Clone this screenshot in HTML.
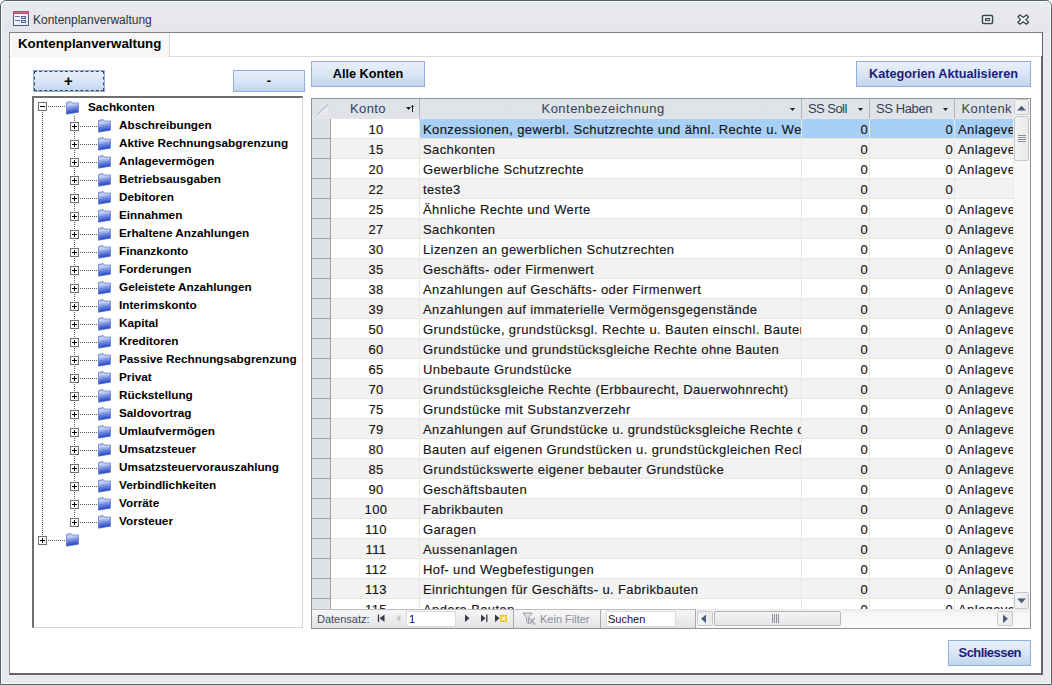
<!DOCTYPE html>
<html><head><meta charset="utf-8">
<style>
*{margin:0;padding:0;box-sizing:border-box}
html,body{width:1052px;height:685px;overflow:hidden;background:#fff}
body{font-family:"Liberation Sans",sans-serif;position:relative}
.abs{position:absolute}
#win{position:absolute;left:0;top:0;width:1052px;height:685px;border:1px solid #5a6068;border-radius:6px 6px 0 0;background:#e8eaee}
#win2{position:absolute;left:1px;top:1px;width:1050px;height:683px;border:1px solid #fbfcfd;border-radius:5px 5px 0 0;background:linear-gradient(#e9ebef,#e3e5ea 31px,#e8eaee 32px)}
#title{position:absolute;left:33px;top:13px;font-size:12px;color:#2b3240;white-space:nowrap}
#inner{position:absolute;left:9px;top:32px;width:1034px;height:643px;background:#fff;border-left:1px solid #898c90;border-top:1px solid #7d8084;border-right:2px solid #62666a;border-bottom:2px solid #62666a}
#tabstrip{position:absolute;left:10px;top:33px;width:1031px;height:24px;border-bottom:1px solid #d9dadc;background:#fff}
#tab{position:absolute;left:11px;top:33px;width:159px;height:24px;background:#f6f6f7;border-right:1px solid #dcdddf;font-weight:bold;font-size:13.3px;color:#000;padding:3px 0 0 7px;white-space:nowrap}
.btn{position:absolute;border:1px solid #8fb0da;background:linear-gradient(#e9f0fa,#d9e5f5 50%,#c1d5ef);font-weight:bold;font-size:13px;text-align:center;white-space:nowrap}
#tree{position:absolute;left:32px;top:96px;width:271px;height:532px;border-left:2px solid #6f6f6f;border-top:2px solid #6f6f6f;border-right:1px solid #d6d6d6;border-bottom:1px solid #d6d6d6;background:#fff;overflow:hidden}

.eb{position:absolute;width:9px;height:9px;border:1px solid #707070;background:#fff}
.eb .h{position:absolute;left:1px;top:3px;width:5px;height:1px;background:#000}
.eb .v{position:absolute;left:3px;top:1px;width:1px;height:5px;background:#000}
.tt{position:absolute;font-weight:bold;font-size:11.75px;line-height:14px;color:#000;white-space:nowrap}
#ds{position:absolute;left:311px;top:98px;width:720px;height:531px;border:1px solid #8f9195;background:#fff;overflow:hidden;font-size:13px}
#dsclip{position:absolute;left:0;top:20px;width:701px;height:490px;overflow:hidden}
.r{position:absolute;left:0;width:760px;height:20px;background:#fff}
.r.alt{background:#f2f2f2}
.r .c{position:absolute;top:0;height:20px;border-right:1px solid #e8e8de;border-bottom:1px solid #e8e8de;line-height:19px;padding-top:1px;white-space:nowrap;overflow:hidden;color:#141414;letter-spacing:0.38px;-webkit-text-stroke:0.15px #141414}
.rs{position:absolute;left:0;top:0;width:19px;height:20px;background:#dfe3e8;border-right:1px solid #9da0a4;border-bottom:1px solid #9da0a4}
.ck{left:19px;width:89px;text-align:center;padding-left:2px}
.cb{left:108px;width:382px;padding-left:3px}
.cs{left:490px;width:68px;text-align:right;padding-right:1px}
.ch{left:558px;width:85px;text-align:right;padding-right:1px}
.cc{left:643px;width:120px;padding-left:3px}
.r.sel .cb,.r.sel .cs,.r.sel .ch,.r.sel .cc{background:#a8d0f4}

#hdr{position:absolute;left:0;top:0;width:760px;height:20px;background:linear-gradient(#e0e3e7,#dfe2e6 70%,#e3e5ea)}
.hb{position:absolute;top:0;width:1px;height:20px;background:#b3b6ba}
.hc{position:absolute;top:0;height:19px;line-height:19px;color:#34405a;white-space:nowrap;font-size:13px}

.sbtn{position:absolute;border:1px solid #c6c8cc;border-radius:2px;background:linear-gradient(90deg,#f4f4f5,#e9eaec)}
.nt{position:absolute;font-size:11px;line-height:17px;white-space:nowrap}
</style></head><body>
<div id="win"></div>
<div id="win2"></div>
<svg class="abs" style="left:13px;top:11px" width="17" height="16" viewBox="0 0 17 16">
  <defs><linearGradient id="ig" x1="0" y1="0" x2="1" y2="1"><stop offset="0" stop-color="#ffffff"/><stop offset="1" stop-color="#dfe6f6"/></linearGradient></defs>
  <rect x="0.5" y="0.5" width="15" height="14" fill="url(#ig)" stroke="#4a5d82"/>
  <rect x="0" y="0" width="16" height="3" fill="#c8406a"/>
  <rect x="1" y="1" width="14" height="1" fill="#e06a8c"/>
  <line x1="2" y1="5.5" x2="7" y2="5.5" stroke="#5b6f9a"/>
  <line x1="2" y1="9.5" x2="7" y2="9.5" stroke="#5b6f9a"/>
  <rect x="8.5" y="5.5" width="4" height="2" fill="#dfe5f2" stroke="#4f6290"/>
  <rect x="8.5" y="9.5" width="4" height="2" fill="#dfe5f2" stroke="#4f6290"/>
</svg>
<div id="title">Kontenplanverwaltung</div>
<svg class="abs" style="left:981px;top:14px" width="14" height="11" viewBox="0 0 14 11">
  <rect x="1.5" y="1.5" width="10" height="8" rx="1" fill="#fff" stroke="#3e4450" stroke-width="1.5"/>
  <rect x="4.5" y="4.5" width="4" height="2" fill="none" stroke="#3e4450" stroke-width="1.2"/>
</svg>
<svg class="abs" style="left:1017px;top:14px" width="13" height="11" viewBox="0 0 13 11"><path d="M0.9 2.9 L3 1 L6.2 3.5 L9.4 1 L11.5 2.9 L8.7 5.6 L11.5 8.3 L9.4 10.2 L6.2 7.7 L3 10.2 L0.9 8.3 L3.7 5.6 Z" fill="#fff" stroke="#3b414c" stroke-width="1.3" stroke-linejoin="round"/></svg>
<div id="inner"></div>
<div id="tabstrip"></div>
<div class="abs" style="left:1041px;top:33px;width:1px;height:23px;background:#fff"></div>
<div id="tab">Kontenplanverwaltung</div>

<div class="btn" style="left:33px;top:70px;width:72px;height:22px;line-height:19px;font-size:15px;text-indent:-1px;outline:1px dashed #3a4a5a;outline-offset:-2px">+</div>
<div class="btn" style="left:233px;top:70px;width:72px;height:22px;line-height:19px">-</div>
<div class="btn" style="left:311px;top:61px;width:114px;height:26px;line-height:24px;color:#000;font-size:12.7px">Alle Konten</div>
<div class="btn" style="left:856px;top:61px;width:175px;height:26px;line-height:24px;color:#1c1c7e;font-size:12.7px">Kategorien Aktualisieren</div>
<div class="btn" style="left:948px;top:640px;width:83px;height:26px;line-height:24px;color:#1c1c7e;letter-spacing:-0.55px;text-indent:0.5px">Schliessen</div>


<div id="tree"></div>
<svg class="abs" style="left:0;top:0" width="1052" height="685"><g stroke="#5c5c5c" stroke-width="1" stroke-dasharray="1 1" fill="none"><path d="M48 106.5H66"/><path d="M42.5 112V540"/><path d="M74.5 116V522"/><path d="M80 126.5H98"/><path d="M80 144.5H98"/><path d="M80 162.5H98"/><path d="M80 180.5H98"/><path d="M80 198.5H98"/><path d="M80 216.5H98"/><path d="M80 234.5H98"/><path d="M80 252.5H98"/><path d="M80 270.5H98"/><path d="M80 288.5H98"/><path d="M80 306.5H98"/><path d="M80 324.5H98"/><path d="M80 342.5H98"/><path d="M80 360.5H98"/><path d="M80 378.5H98"/><path d="M80 396.5H98"/><path d="M80 414.5H98"/><path d="M80 432.5H98"/><path d="M80 450.5H98"/><path d="M80 468.5H98"/><path d="M80 486.5H98"/><path d="M80 504.5H98"/><path d="M80 522.5H98"/><path d="M48 540.5H66"/></g></svg>
<div class="eb" style="left:38px;top:102px"><i class="h"></i></div>
<svg class="abs" style="left:66px;top:101px" width="14" height="14" viewBox="0 0 14 14"><use href="#fold"/></svg>
<div class="tt" style="left:88px;top:99.5px">Sachkonten</div>
<div class="eb" style="left:70px;top:122px"><i class="h"></i><i class="v"></i></div>
<svg class="abs" style="left:98px;top:119px" width="14" height="14" viewBox="0 0 14 14"><use href="#fold"/></svg>
<div class="tt" style="left:119px;top:118px">Abschreibungen</div>
<div class="eb" style="left:70px;top:140px"><i class="h"></i><i class="v"></i></div>
<svg class="abs" style="left:98px;top:137px" width="14" height="14" viewBox="0 0 14 14"><use href="#fold"/></svg>
<div class="tt" style="left:119px;top:136px">Aktive Rechnungsabgrenzung</div>
<div class="eb" style="left:70px;top:158px"><i class="h"></i><i class="v"></i></div>
<svg class="abs" style="left:98px;top:155px" width="14" height="14" viewBox="0 0 14 14"><use href="#fold"/></svg>
<div class="tt" style="left:119px;top:154px">Anlagevermögen</div>
<div class="eb" style="left:70px;top:176px"><i class="h"></i><i class="v"></i></div>
<svg class="abs" style="left:98px;top:173px" width="14" height="14" viewBox="0 0 14 14"><use href="#fold"/></svg>
<div class="tt" style="left:119px;top:172px">Betriebsausgaben</div>
<div class="eb" style="left:70px;top:194px"><i class="h"></i><i class="v"></i></div>
<svg class="abs" style="left:98px;top:191px" width="14" height="14" viewBox="0 0 14 14"><use href="#fold"/></svg>
<div class="tt" style="left:119px;top:190px">Debitoren</div>
<div class="eb" style="left:70px;top:212px"><i class="h"></i><i class="v"></i></div>
<svg class="abs" style="left:98px;top:209px" width="14" height="14" viewBox="0 0 14 14"><use href="#fold"/></svg>
<div class="tt" style="left:119px;top:208px">Einnahmen</div>
<div class="eb" style="left:70px;top:230px"><i class="h"></i><i class="v"></i></div>
<svg class="abs" style="left:98px;top:227px" width="14" height="14" viewBox="0 0 14 14"><use href="#fold"/></svg>
<div class="tt" style="left:119px;top:226px">Erhaltene Anzahlungen</div>
<div class="eb" style="left:70px;top:248px"><i class="h"></i><i class="v"></i></div>
<svg class="abs" style="left:98px;top:245px" width="14" height="14" viewBox="0 0 14 14"><use href="#fold"/></svg>
<div class="tt" style="left:119px;top:244px">Finanzkonto</div>
<div class="eb" style="left:70px;top:266px"><i class="h"></i><i class="v"></i></div>
<svg class="abs" style="left:98px;top:263px" width="14" height="14" viewBox="0 0 14 14"><use href="#fold"/></svg>
<div class="tt" style="left:119px;top:262px">Forderungen</div>
<div class="eb" style="left:70px;top:284px"><i class="h"></i><i class="v"></i></div>
<svg class="abs" style="left:98px;top:281px" width="14" height="14" viewBox="0 0 14 14"><use href="#fold"/></svg>
<div class="tt" style="left:119px;top:280px">Geleistete Anzahlungen</div>
<div class="eb" style="left:70px;top:302px"><i class="h"></i><i class="v"></i></div>
<svg class="abs" style="left:98px;top:299px" width="14" height="14" viewBox="0 0 14 14"><use href="#fold"/></svg>
<div class="tt" style="left:119px;top:298px">Interimskonto</div>
<div class="eb" style="left:70px;top:320px"><i class="h"></i><i class="v"></i></div>
<svg class="abs" style="left:98px;top:317px" width="14" height="14" viewBox="0 0 14 14"><use href="#fold"/></svg>
<div class="tt" style="left:119px;top:316px">Kapital</div>
<div class="eb" style="left:70px;top:338px"><i class="h"></i><i class="v"></i></div>
<svg class="abs" style="left:98px;top:335px" width="14" height="14" viewBox="0 0 14 14"><use href="#fold"/></svg>
<div class="tt" style="left:119px;top:334px">Kreditoren</div>
<div class="eb" style="left:70px;top:356px"><i class="h"></i><i class="v"></i></div>
<svg class="abs" style="left:98px;top:353px" width="14" height="14" viewBox="0 0 14 14"><use href="#fold"/></svg>
<div class="tt" style="left:119px;top:352px">Passive Rechnungsabgrenzung</div>
<div class="eb" style="left:70px;top:374px"><i class="h"></i><i class="v"></i></div>
<svg class="abs" style="left:98px;top:371px" width="14" height="14" viewBox="0 0 14 14"><use href="#fold"/></svg>
<div class="tt" style="left:119px;top:370px">Privat</div>
<div class="eb" style="left:70px;top:392px"><i class="h"></i><i class="v"></i></div>
<svg class="abs" style="left:98px;top:389px" width="14" height="14" viewBox="0 0 14 14"><use href="#fold"/></svg>
<div class="tt" style="left:119px;top:388px">Rückstellung</div>
<div class="eb" style="left:70px;top:410px"><i class="h"></i><i class="v"></i></div>
<svg class="abs" style="left:98px;top:407px" width="14" height="14" viewBox="0 0 14 14"><use href="#fold"/></svg>
<div class="tt" style="left:119px;top:406px">Saldovortrag</div>
<div class="eb" style="left:70px;top:428px"><i class="h"></i><i class="v"></i></div>
<svg class="abs" style="left:98px;top:425px" width="14" height="14" viewBox="0 0 14 14"><use href="#fold"/></svg>
<div class="tt" style="left:119px;top:424px">Umlaufvermögen</div>
<div class="eb" style="left:70px;top:446px"><i class="h"></i><i class="v"></i></div>
<svg class="abs" style="left:98px;top:443px" width="14" height="14" viewBox="0 0 14 14"><use href="#fold"/></svg>
<div class="tt" style="left:119px;top:442px">Umsatzsteuer</div>
<div class="eb" style="left:70px;top:464px"><i class="h"></i><i class="v"></i></div>
<svg class="abs" style="left:98px;top:461px" width="14" height="14" viewBox="0 0 14 14"><use href="#fold"/></svg>
<div class="tt" style="left:119px;top:460px">Umsatzsteuervorauszahlung</div>
<div class="eb" style="left:70px;top:482px"><i class="h"></i><i class="v"></i></div>
<svg class="abs" style="left:98px;top:479px" width="14" height="14" viewBox="0 0 14 14"><use href="#fold"/></svg>
<div class="tt" style="left:119px;top:478px">Verbindlichkeiten</div>
<div class="eb" style="left:70px;top:500px"><i class="h"></i><i class="v"></i></div>
<svg class="abs" style="left:98px;top:497px" width="14" height="14" viewBox="0 0 14 14"><use href="#fold"/></svg>
<div class="tt" style="left:119px;top:496px">Vorräte</div>
<div class="eb" style="left:70px;top:518px"><i class="h"></i><i class="v"></i></div>
<svg class="abs" style="left:98px;top:515px" width="14" height="14" viewBox="0 0 14 14"><use href="#fold"/></svg>
<div class="tt" style="left:119px;top:514px">Vorsteuer</div>
<div class="eb" style="left:38px;top:536px"><i class="h"></i><i class="v"></i></div>
<svg class="abs" style="left:66px;top:533px" width="14" height="14" viewBox="0 0 14 14"><use href="#fold"/></svg>
<div id="ds">
<div id="hdr"><svg width="19" height="19" class="abs" style="left:0;top:0"><path d="M5 16 L16 5.5 L16 16 Z" fill="#e9ebf1"/><path d="M5 16 L16 5.5" stroke="#b9c0d6" stroke-width="1.1"/></svg><div class="hb" style="left:107px"></div><div class="hb" style="left:489px"></div><div class="hb" style="left:557px"></div><div class="hb" style="left:642px"></div><div class="hc" style="left:38px;letter-spacing:0.4px">Konto</div><div class="hc" style="left:229.5px;letter-spacing:0.48px">Kontenbezeichnung</div><div class="hc" style="left:496px;letter-spacing:-0.55px">SS Soll</div><div class="hc" style="left:564px;letter-spacing:-0.4px">SS Haben</div><div class="hc" style="left:649.5px;letter-spacing:0.4px;width:50px;overflow:hidden">Kontenkategorie</div><svg class="abs" style="left:94px;top:5px" width="10" height="9"><path d="M0 3H5L2.5 6Z" fill="#1e1e1e"/><path d="M6.5 1.5V8" stroke="#1e1e1e" stroke-width="1"/><path d="M5 3L6.5 1L8 3Z" fill="#1e1e1e"/></svg><svg class="abs" style="left:478px;top:9px" width="5" height="3"><path d="M0 0H5L2.5 3Z" fill="#1e1e1e"/></svg><svg class="abs" style="left:546px;top:9px" width="5" height="3"><path d="M0 0H5L2.5 3Z" fill="#1e1e1e"/></svg><svg class="abs" style="left:631px;top:9px" width="5" height="3"><path d="M0 0H5L2.5 3Z" fill="#1e1e1e"/></svg></div>
<div id="dsclip">
<div class="r sel" style="top:0px"><div class="rs"></div><div class="c ck">10</div><div class="c cb">Konzessionen, gewerbl. Schutzrechte und ähnl. Rechte u. Werte</div><div class="c cs">0</div><div class="c ch">0</div><div class="c cc">Anlagevermögen</div></div>
<div class="r alt" style="top:20px"><div class="rs"></div><div class="c ck">15</div><div class="c cb">Sachkonten</div><div class="c cs">0</div><div class="c ch">0</div><div class="c cc">Anlagevermögen</div></div>
<div class="r" style="top:40px"><div class="rs"></div><div class="c ck">20</div><div class="c cb">Gewerbliche Schutzrechte</div><div class="c cs">0</div><div class="c ch">0</div><div class="c cc">Anlagevermögen</div></div>
<div class="r alt" style="top:60px"><div class="rs"></div><div class="c ck">22</div><div class="c cb">teste3</div><div class="c cs">0</div><div class="c ch">0</div><div class="c cc"></div></div>
<div class="r" style="top:80px"><div class="rs"></div><div class="c ck">25</div><div class="c cb">Ähnliche Rechte und Werte</div><div class="c cs">0</div><div class="c ch">0</div><div class="c cc">Anlagevermögen</div></div>
<div class="r alt" style="top:100px"><div class="rs"></div><div class="c ck">27</div><div class="c cb">Sachkonten</div><div class="c cs">0</div><div class="c ch">0</div><div class="c cc">Anlagevermögen</div></div>
<div class="r" style="top:120px"><div class="rs"></div><div class="c ck">30</div><div class="c cb">Lizenzen an gewerblichen Schutzrechten</div><div class="c cs">0</div><div class="c ch">0</div><div class="c cc">Anlagevermögen</div></div>
<div class="r alt" style="top:140px"><div class="rs"></div><div class="c ck">35</div><div class="c cb">Geschäfts- oder Firmenwert</div><div class="c cs">0</div><div class="c ch">0</div><div class="c cc">Anlagevermögen</div></div>
<div class="r" style="top:160px"><div class="rs"></div><div class="c ck">38</div><div class="c cb">Anzahlungen auf Geschäfts- oder Firmenwert</div><div class="c cs">0</div><div class="c ch">0</div><div class="c cc">Anlagevermögen</div></div>
<div class="r alt" style="top:180px"><div class="rs"></div><div class="c ck">39</div><div class="c cb">Anzahlungen auf immaterielle Vermögensgegenstände</div><div class="c cs">0</div><div class="c ch">0</div><div class="c cc">Anlagevermögen</div></div>
<div class="r" style="top:200px"><div class="rs"></div><div class="c ck">50</div><div class="c cb">Grundstücke, grundstücksgl. Rechte u. Bauten einschl. Bauten</div><div class="c cs">0</div><div class="c ch">0</div><div class="c cc">Anlagevermögen</div></div>
<div class="r alt" style="top:220px"><div class="rs"></div><div class="c ck">60</div><div class="c cb">Grundstücke und grundstücksgleiche Rechte ohne Bauten</div><div class="c cs">0</div><div class="c ch">0</div><div class="c cc">Anlagevermögen</div></div>
<div class="r" style="top:240px"><div class="rs"></div><div class="c ck">65</div><div class="c cb">Unbebaute Grundstücke</div><div class="c cs">0</div><div class="c ch">0</div><div class="c cc">Anlagevermögen</div></div>
<div class="r alt" style="top:260px"><div class="rs"></div><div class="c ck">70</div><div class="c cb">Grundstücksgleiche Rechte (Erbbaurecht, Dauerwohnrecht)</div><div class="c cs">0</div><div class="c ch">0</div><div class="c cc">Anlagevermögen</div></div>
<div class="r" style="top:280px"><div class="rs"></div><div class="c ck">75</div><div class="c cb">Grundstücke mit Substanzverzehr</div><div class="c cs">0</div><div class="c ch">0</div><div class="c cc">Anlagevermögen</div></div>
<div class="r alt" style="top:300px"><div class="rs"></div><div class="c ck">79</div><div class="c cb">Anzahlungen auf Grundstücke u. grundstücksgleiche Rechte ohne Bauten</div><div class="c cs">0</div><div class="c ch">0</div><div class="c cc">Anlagevermögen</div></div>
<div class="r" style="top:320px"><div class="rs"></div><div class="c ck">80</div><div class="c cb">Bauten auf eigenen Grundstücken u. grundstückgleichen Rechten</div><div class="c cs">0</div><div class="c ch">0</div><div class="c cc">Anlagevermögen</div></div>
<div class="r alt" style="top:340px"><div class="rs"></div><div class="c ck">85</div><div class="c cb">Grundstückswerte eigener bebauter Grundstücke</div><div class="c cs">0</div><div class="c ch">0</div><div class="c cc">Anlagevermögen</div></div>
<div class="r" style="top:360px"><div class="rs"></div><div class="c ck">90</div><div class="c cb">Geschäftsbauten</div><div class="c cs">0</div><div class="c ch">0</div><div class="c cc">Anlagevermögen</div></div>
<div class="r alt" style="top:380px"><div class="rs"></div><div class="c ck">100</div><div class="c cb">Fabrikbauten</div><div class="c cs">0</div><div class="c ch">0</div><div class="c cc">Anlagevermögen</div></div>
<div class="r" style="top:400px"><div class="rs"></div><div class="c ck">110</div><div class="c cb">Garagen</div><div class="c cs">0</div><div class="c ch">0</div><div class="c cc">Anlagevermögen</div></div>
<div class="r alt" style="top:420px"><div class="rs"></div><div class="c ck">111</div><div class="c cb">Aussenanlagen</div><div class="c cs">0</div><div class="c ch">0</div><div class="c cc">Anlagevermögen</div></div>
<div class="r" style="top:440px"><div class="rs"></div><div class="c ck">112</div><div class="c cb">Hof- und Wegbefestigungen</div><div class="c cs">0</div><div class="c ch">0</div><div class="c cc">Anlagevermögen</div></div>
<div class="r alt" style="top:460px"><div class="rs"></div><div class="c ck">113</div><div class="c cb">Einrichtungen für Geschäfts- u. Fabrikbauten</div><div class="c cs">0</div><div class="c ch">0</div><div class="c cc">Anlagevermögen</div></div>
<div class="r" style="top:480px"><div class="rs"></div><div class="c ck">115</div><div class="c cb">Andere Bauten</div><div class="c cs">0</div><div class="c ch">0</div><div class="c cc">Anlagevermögen</div></div>
</div>
</div>
<!-- vertical scrollbar -->
<div class="abs" style="left:1013px;top:99px;width:17px;height:510px;background:#f7f7f7;border-left:1px solid #ededed"></div>
<div class="sbtn" style="left:1014px;top:99px;width:15px;height:16px"></div>
<svg class="abs" style="left:1016px;top:105px" width="11" height="6"><path d="M1 5.5 L5.5 0.8 L10 5.5 Z" fill="#4d5b7c"/></svg>
<div class="sbtn" style="left:1014px;top:116px;width:15px;height:45px"></div>
<svg class="abs" style="left:1018px;top:135px" width="8" height="8"><path d="M0 0.5H8M0 2.5H8M0 4.5H8M0 6.5H8" stroke="#8a8f96" stroke-width="1"/></svg>
<div class="sbtn" style="left:1014px;top:592px;width:15px;height:17px"></div>
<svg class="abs" style="left:1016px;top:598px" width="11" height="6"><path d="M1 0.5 L5.5 5.2 L10 0.5 Z" fill="#4d5b7c"/></svg>
<!-- nav bar -->
<div class="abs" style="left:312px;top:609px;width:384px;height:19px;border-top:1px solid #b9bcc0;background:linear-gradient(#f6f6f7,#ececee 50%,#e3e4e7)"></div>
<div class="nt" style="left:317px;top:611px;color:#3d4a68">Datensatz:</div>
<svg class="abs" style="left:377px;top:614px" width="9" height="9"><path d="M1.5 0.5V8" stroke="#3a3d42" stroke-width="1.3"/><path d="M7.5 0.5 L2.6 4.3 L7.5 8 Z" fill="#3a3d42"/></svg>
<svg class="abs" style="left:395px;top:614px" width="7" height="9"><path d="M5.5 0.5 L1 4.3 L5.5 8 Z" fill="#c4c6ca"/></svg>
<div class="abs" style="left:406px;top:611px;width:50px;height:16px;background:#fff;border:1px solid #d9dadd"></div>
<div class="nt" style="left:409px;top:611px;color:#101030">1</div>
<svg class="abs" style="left:464px;top:614px" width="7" height="9"><path d="M1 0.5 L5.5 4.3 L1 8 Z" fill="#3a3d42"/></svg>
<svg class="abs" style="left:480px;top:614px" width="9" height="9"><path d="M1 0.5 L5.5 4.3 L1 8 Z" fill="#3a3d42"/><path d="M6.8 0.5V8" stroke="#3a3d42" stroke-width="1.3"/></svg>
<svg class="abs" style="left:495px;top:614px" width="14" height="10"><path d="M0 0.5 L4.5 4.3 L0 8 Z" fill="#34373c"/><rect x="5" y="1" width="7" height="7" fill="#f4d538"/><rect x="7" y="3" width="3" height="3" fill="#fffbe0"/><g fill="#e0a800"><rect x="5" y="1" width="1" height="1"/><rect x="8" y="1" width="1" height="1"/><rect x="11" y="1" width="1" height="1"/><rect x="5" y="4" width="1" height="1"/><rect x="11" y="4" width="1" height="1"/><rect x="5" y="7" width="1" height="1"/><rect x="8" y="7" width="1" height="1"/><rect x="11" y="7" width="1" height="1"/></g></svg>
<div class="abs" style="left:513px;top:609px;width:88px;height:19px;border-left:1px solid #a7a9ad;border-right:1px solid #a7a9ad;border-top:1px solid #b9bcc0;background:linear-gradient(#f7f7f8,#ededef 50%,#e2e3e6)"></div>
<svg class="abs" style="left:522px;top:612px" width="16" height="14"><path d="M0.8 1 H10.2 L6.6 5.5 V12 L4.6 10 V5.5 Z" fill="#e2e3e7" stroke="#9c9ea4" stroke-width="1"/><path d="M7.2 6.2 L13.2 12.6 M12.8 6 L7.6 11.8" stroke="#a3a5ab" stroke-width="1.5"/></svg>
<div class="nt" style="left:540px;top:611px;color:#8d909a">Kein Filter</div>
<div class="abs" style="left:606px;top:611px;width:70px;height:16px;background:#fff;border:1px solid #d9dadd"></div>
<div class="nt" style="left:608px;top:611px;color:#10102a">Suchen</div>
<div class="abs" style="left:695px;top:609px;width:1px;height:19px;background:#a7a9ad"></div>
<!-- horizontal scrollbar -->
<div class="abs" style="left:696px;top:609px;width:334px;height:19px;background:linear-gradient(#e9eaeb,#f6f6f7 25%,#fafafa)"></div>
<div class="sbtn" style="left:697px;top:611px;width:16px;height:15px"></div>
<svg class="abs" style="left:700px;top:614px" width="7" height="10"><path d="M6 0.5 L1 4.8 L6 9 Z" fill="#4d5b7c"/></svg>
<div class="sbtn" style="left:714px;top:611px;width:127px;height:15px;border-color:#b4b7bb;background:linear-gradient(#f3f3f4,#e6e7e9)"></div>
<svg class="abs" style="left:772px;top:614px" width="8" height="9"><path d="M0.5 0V9M2.5 0V9M4.5 0V9M6.5 0V9" stroke="#8a8f96" stroke-width="1"/></svg>
<div class="sbtn" style="left:997px;top:611px;width:16px;height:15px"></div>
<svg class="abs" style="left:1002px;top:614px" width="7" height="10"><path d="M1 0.5 L6 4.8 L1 9 Z" fill="#4d5b7c"/></svg>

<svg width="0" height="0" style="position:absolute"><defs>
<linearGradient id="fg" x1="0" y1="0" x2="0.15" y2="1"><stop offset="0" stop-color="#a4b3ea"/><stop offset="0.28" stop-color="#c9d3f6"/><stop offset="0.55" stop-color="#7890e4"/><stop offset="1" stop-color="#2040c2"/></linearGradient>
<g id="fold"><path d="M0.5 1.5 L5 0.5 L6.5 2 L12.5 2 L12.5 11.2 L0.5 13.2 Z" fill="url(#fg)" stroke="#5a72c8" stroke-width="0.7"/></g>
</defs></svg>
</body></html>
